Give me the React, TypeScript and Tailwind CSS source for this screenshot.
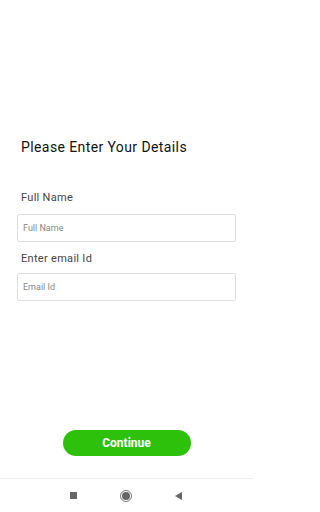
import React from 'react';

export default function App() {
  return (
    <div className="flex flex-col h-[512px] w-full bg-white overflow-hidden" style={{ fontFamily: 'Roboto, "Liberation Sans", sans-serif' }}>
      {/* Form */}
      <div className="flex-1 flex flex-col pt-[137px]">
        <h1 className="px-[21px] text-[14px] leading-[20px] text-[#111] tracking-[0.4px]">Please Enter Your Details</h1>

        <label className="px-[21px] mt-[34px] text-[11px] leading-[14px] text-[#444] tracking-[0.3px]">Full Name</label>
        <input
          placeholder="Full Name"
          className="w-[219px] ml-[17px] mt-[9px] h-[28px] px-[5px] border border-[#dedede] rounded-[2px] text-[9px] placeholder:text-[#888] outline-none"
        />

        <label className="px-[21px] mt-[10px] text-[11px] leading-[14px] text-[#444] tracking-[0.3px]">Enter email Id</label>
        <input
          placeholder="Email Id"
          className="w-[219px] ml-[17px] mt-[7px] h-[28px] px-[5px] border border-[#dedede] rounded-[2px] text-[9px] placeholder:text-[#888] outline-none"
        />

        <div className="flex-1" />

        <div className="w-[253px] flex justify-center mb-[22px]">
          <button className="w-[128px] h-[26px] rounded-full bg-[#2ec10c] text-white text-[12px] font-bold">
            Continue
          </button>
        </div>
      </div>

      {/* Navigation bar */}
      <div className="w-[253px] h-[34px] border-t border-[#eeeeee] flex items-center justify-center gap-[43px] pr-[2px]">
        <div className="w-[7px] h-[7px] bg-[#666]" />
        <div className="w-[12px] h-[12px] rounded-full border border-[#777] flex items-center justify-center">
          <div className="w-[8px] h-[8px] rounded-full bg-[#666]" />
        </div>
        <svg width="7" height="8" viewBox="0 0 7 8">
          <path d="M7 0 L7 8 L0 4 Z" fill="#666" />
        </svg>
      </div>
    </div>
  );
}
